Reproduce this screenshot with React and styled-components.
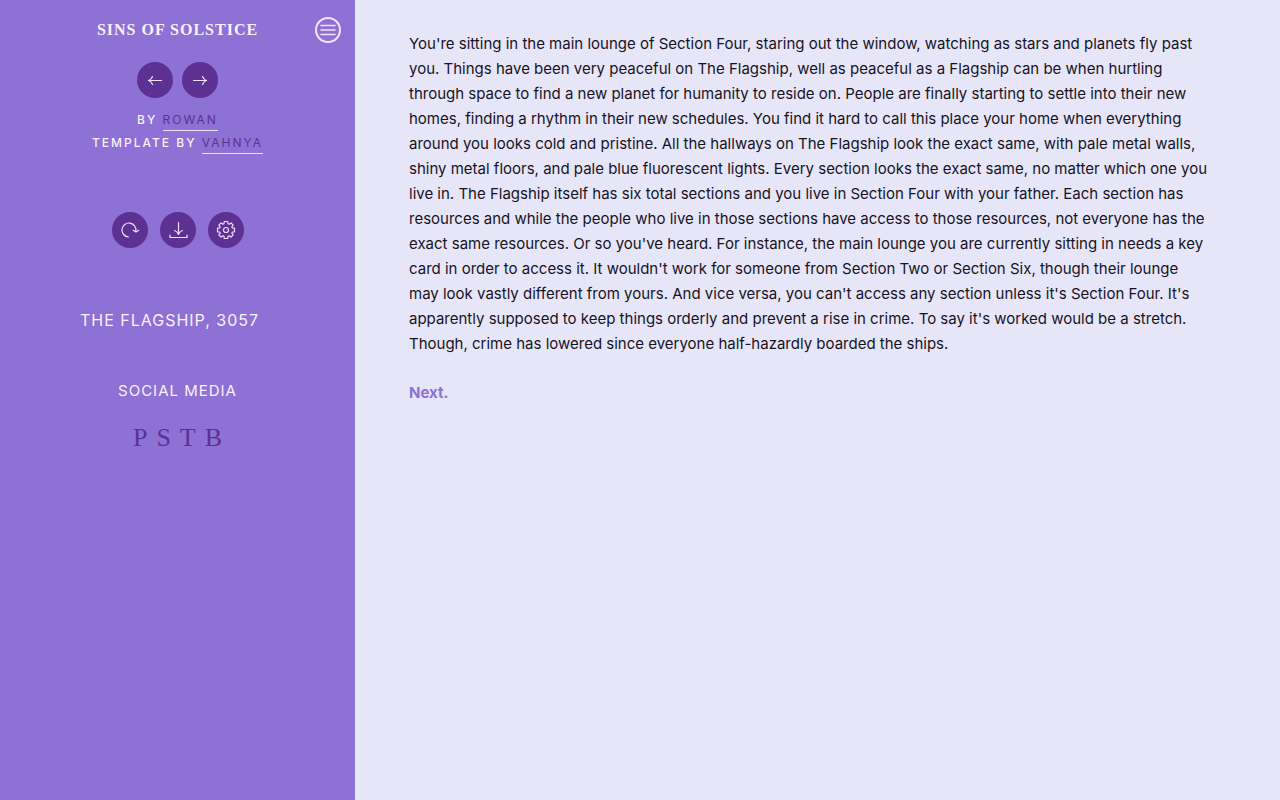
import styled, { createGlobalStyle } from 'styled-components'

const GlobalStyle = createGlobalStyle`
  * {
    box-sizing: border-box;
  }

  body {
    margin: 0;
    background: #e7e6f8;
    font-family: Inter, "Liberation Sans", sans-serif;
  }
`

const Page = styled.div`
  display: flex;
  min-height: 100vh;
`

const Sidebar = styled.aside`
  display: flex;
  flex: 0 0 355px;
  flex-direction: column;
  align-items: center;
  padding-top: 16px;
  background: #8d71d4;
  color: #f9f0fd;
  text-transform: uppercase;
`

const Header = styled.header`
  display: grid;
  grid-template-columns: 1fr auto 1fr;
  align-items: center;
  width: 100%;
  padding: 0 14px;
  margin-bottom: 18px;
`

const Title = styled.h1`
  grid-column: 2;
  margin: 0;
  font: bold 16px/28px "Liberation Serif", serif;
  letter-spacing: 1px;
`

const IconButton = styled.button`
  display: flex;
  align-items: center;
  justify-content: center;
  width: 36px;
  height: 36px;
  padding: 0;
  border: 0;
  border-radius: 50%;
  background: #5d3193;
  color: #f2e0fa;
  cursor: pointer;
`

const MenuButton = styled(IconButton)`
  justify-self: end;
  width: 26px;
  height: 26px;
  border: 2px solid #f2e6fc;
  background: transparent;
`

const Buttons = styled.div`
  display: flex;
  gap: ${(props) => props.$gap}px;
`

const Drawing = styled.svg`
  flex: none;
  width: 20px;
  height: 20px;
  fill: none;
  stroke: currentColor;
  stroke-width: ${(props) => props.$weight};
  stroke-linecap: round;
  stroke-linejoin: round;
`

const Credits = styled.p`
  margin: 10px 0 58px;
  font-size: 12px;
  font-weight: 500;
  line-height: 23px;
  letter-spacing: 2px;
  text-align: center;
`

const Author = styled.a`
  display: inline-block;
  border-bottom: 1px solid #f2e0fa;
  color: #5d3193;
  font-weight: 400;
  line-height: 21px;
  text-decoration: none;
`

const Place = styled.p`
  width: 100%;
  margin: 60px 0 0;
  padding-right: 16px;
  font-size: 16px;
  line-height: 24px;
  letter-spacing: 1px;
  text-align: center;
`

const Heading = styled.h2`
  margin: 48px 0 22px;
  font-size: 15px;
  font-weight: 400;
  line-height: 22px;
  letter-spacing: 1px;
`

const Social = styled.nav`
  display: flex;
  gap: 9px;
`

const SocialLink = styled.a`
  color: #5d3193;
  font: 26px/28px "Liberation Serif", serif;
  text-decoration: none;
`

const Passage = styled.main`
  flex: 1;
  min-width: 0;
  padding: 31px 54px;
  color: #16131f;
  font-size: 15px;
  line-height: 25px;
`

const Story = styled.p`
  margin: 0 0 24px;
`

const Next = styled.a`
  color: #8d71d4;
  font-weight: 700;
  text-decoration: none;
`

const lines = [
  "You're sitting in the main lounge of Section Four, staring out the window, watching as stars and planets fly past",
  'you. Things have been very peaceful on The Flagship, well as peaceful as a Flagship can be when hurtling',
  'through space to find a new planet for humanity to reside on. People are finally starting to settle into their new',
  'homes, finding a rhythm in their new schedules. You find it hard to call this place your home when everything',
  'around you looks cold and pristine. All the hallways on The Flagship look the exact same, with pale metal walls,',
  'shiny metal floors, and pale blue fluorescent lights. Every section looks the exact same, no matter which one you',
  'live in. The Flagship itself has six total sections and you live in Section Four with your father. Each section has',
  'resources and while the people who live in those sections have access to those resources, not everyone has the',
  "exact same resources. Or so you've heard. For instance, the main lounge you are currently sitting in needs a key",
  "card in order to access it. It wouldn't work for someone from Section Two or Section Six, though their lounge",
  "may look vastly different from yours. And vice versa, you can't access any section unless it's Section Four. It's",
  "apparently supposed to keep things orderly and prevent a rise in crime. To say it's worked would be a stretch.",
  'Though, crime has lowered since everyone half-hazardly boarded the ships.',
]

const paths = {
  menu: 'M3 5.5h14M3 10h14M3 14.5h14',
  back: 'M16.5 10.5h-13M7.500 6.500Q6.500 9.500 3.500 10.500Q6.500 11.500 7.500 14.500',
  forward: 'M3.500 10.500h13M12.500 6.500Q13.500 9.500 16.500 10.500Q13.500 11.500 12.500 14.500',
  restart: 'M8.500 17A7 7 0 1 1 15.800 11.500M13.300 10.300L16 12L18.700 10.300',
  save: 'M10.500 2.500v12M6.500 10.500Q9.500 11.500 10.500 14.500Q11.500 11.500 14.500 10.500M2 15v2.500h17V15',
  settings:
    'M8 3.700L8.200 1.500H11.800L12 3.700L13.200 4.200L15 2.900L17.200 5.100L15.800 6.800L16.300 8L18.500 8.200V11.800L16.300 12L15.800 13.200L17.200 14.900L15 17.100L13.200 15.800L12 16.300L11.800 18.500H8.200L8 16.300L6.800 15.800L5 17.100L2.800 14.900L4.200 13.200L3.700 12L1.500 11.800V8.200L3.700 8L4.200 6.800L2.800 5.100L5 2.900L6.800 4.200ZM12.500 10A2.500 2.500 0 1 1 7.500 10A2.500 2.500 0 1 1 12.500 10',
}

const Icon = ({ name, weight = 1.2 }) => (
  <Drawing viewBox="0 0 20 20" $weight={weight} aria-hidden="true">
    <path d={paths[name]} />
  </Drawing>
)

const App = () => (
  <>
    <GlobalStyle />
    <Page>
      <Sidebar>
        <Header>
          <Title>Sins of Solstice</Title>
          <MenuButton aria-label="Menu"><Icon name="menu" weight={1.6} /></MenuButton>
        </Header>
        <Buttons $gap={9}>
          <IconButton aria-label="Back"><Icon name="back" /></IconButton>
          <IconButton aria-label="Forward"><Icon name="forward" /></IconButton>
        </Buttons>
        <Credits>
          By <Author href="#rowan">Rowan</Author>
          <br />
          Template by <Author href="#vahnya">Vahnya</Author>
        </Credits>
        <Buttons $gap={12}>
          <IconButton aria-label="Restart"><Icon name="restart" /></IconButton>
          <IconButton aria-label="Save"><Icon name="save" /></IconButton>
          <IconButton aria-label="Settings"><Icon name="settings" /></IconButton>
        </Buttons>
        <Place>The Flagship, 3057</Place>
        <Heading>Social Media</Heading>
        <Social>
          {['P', 'S', 'T', 'B'].map((letter) => (
            <SocialLink key={letter} href={`#${letter}`}>{letter}</SocialLink>
          ))}
        </Social>
      </Sidebar>
      <Passage>
        <Story>
          {lines.map((line) => (
            <span key={line}>{line}<br /></span>
          ))}
        </Story>
        <Next href="#next">Next.</Next>
      </Passage>
    </Page>
  </>
)

export default App
